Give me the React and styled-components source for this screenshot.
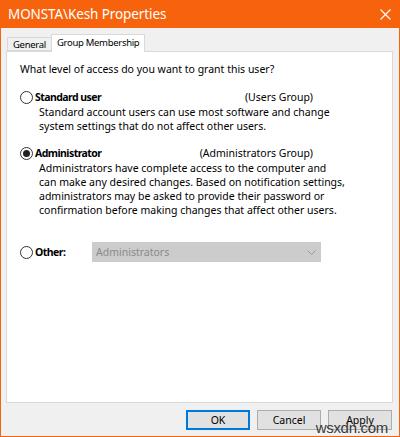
import React, { useState } from 'react';
import styled, { createGlobalStyle } from 'styled-components';

const GlobalStyle = createGlobalStyle`
  html, body { margin: 0; padding: 0; background: #f0f0f0; }
  body { font-family: "Noto Sans", "Liberation Sans", sans-serif; }
`;

const Window = styled.div`
  width: 400px;
  height: 437px;
  box-sizing: border-box;
  border: 1px solid #f7630c;
  border-top: none;
  background: #f0f0f0;
  display: flex;
  flex-direction: column;
  position: relative;
  color: #000;
`;

const TitleBar = styled.div`
  height: 28px;
  margin: 0 -1px;
  background: #f7630c;
  color: #fff;
  display: flex;
  align-items: center;
  justify-content: space-between;
  padding: 0 9px 0 8px;
  font-size: 13.5px;
  letter-spacing: -0.1px;
`;

const CloseButton = styled.span`
  display: flex;
  align-items: center;
`;

const Body = styled.div`
  flex: 1;
  padding: 6px 6px 0 5px;
  display: flex;
  flex-direction: column;
`;

const TabStrip = styled.div`
  display: flex;
  align-items: flex-end;
  height: 17px;
  margin-left: 1px;
`;

const Tab = styled.div`
  height: ${p => (p.$active ? '18px' : '14px')};
  box-sizing: border-box;
  padding: 0 5px;
  background: ${p => (p.$active ? '#fff' : '#f0f0f0')};
  border: 1px solid #d9d9d9;
  border-bottom: ${p => (p.$active ? 'none' : '1px solid #d9d9d9')};
  margin-left: ${p => (p.$active ? '-1px' : '0')};
  font-size: 9.5px;
  letter-spacing: -0.3px;
  display: flex;
  align-items: ${p => (p.$active ? 'flex-start' : 'center')};
  padding-top: ${p => (p.$active ? '1px' : '0')};
  position: relative;
  z-index: ${p => (p.$active ? 1 : 0)};
  margin-bottom: ${p => (p.$active ? '-1px' : '0')};
  cursor: default;
`;

const Panel = styled.div`
  height: 352px;
  box-sizing: border-box;
  background: #fff;
  border: 1px solid #d9d9d9;
  padding: 10px 14px 0 13px;
  font-size: 10.5px;
  display: flex;
  flex-direction: column;
`;

const Prompt = styled.div`
  margin: 0 0 13px 0;
  line-height: 14px;
`;

const Option = styled.div`
  display: flex;
  flex-direction: column;
  margin-top: ${p => p.$gap || '0'};
`;

const OptionHead = styled.label`
  display: flex;
  align-items: center;
  height: 16px;
  width: 293px;
  cursor: default;
`;

const Radio = styled.span`
  width: 11px;
  height: 11px;
  border: 1px solid #333;
  border-radius: 50%;
  margin-right: 2px;
  display: flex;
  align-items: center;
  justify-content: center;
  flex-shrink: 0;

  &::after {
    content: '';
    width: 7px;
    height: 7px;
    border-radius: 50%;
    background: ${p => (p.$checked ? '#222' : 'transparent')};
  }
`;

const OptionLabel = styled.span`
  font-weight: bold;
  letter-spacing: -0.55px;
  width: ${p => p.$width || 'auto'};
  flex-shrink: 0;
`;

const Group = styled.span`
  margin-left: auto;
`;

const Description = styled.div`
  margin-left: 19px;
  line-height: 14px;
`;

const Line = styled.div`
  white-space: nowrap;
`;

const Select = styled.div`
  width: 229px;
  height: 20px;
  flex-shrink: 0;
  box-sizing: border-box;
  background: #cccccc;
  color: #8a8a8a;
  display: flex;
  align-items: center;
  justify-content: space-between;
  padding: 0 5px 0 4px;
`;

const Footer = styled.div`
  display: flex;
  justify-content: flex-end;
  gap: 7px;
  padding: 7px 1px 0 0;
`;

const Button = styled.button`
  width: 64px;
  height: 20px;
  box-sizing: border-box;
  font-family: inherit;
  font-size: 10.5px;
  color: #000;
  padding: 0;
  background: #e1e1e1;
  border: 1px solid ${p => (p.$default ? '#0078d7' : '#adadad')};
  box-shadow: ${p => (p.$default ? 'inset 0 0 0 1px #0078d7' : 'none')};
`;

const Watermark = styled.span`
  position: absolute;
  right: 11px;
  bottom: 0;
  font-family: "Liberation Sans", Arial, sans-serif;
  font-size: 15px;
  color: #3a3a3a;
  letter-spacing: -0.3px;
`;

const options = [
  {
    id: 'standard',
    label: 'Standard user',
    group: '(Users Group)',
    gap: '0',
    lines: [
      'Standard account users can use most software and change',
      'system settings that do not affect other users.',
    ],
  },
  {
    id: 'admin',
    label: 'Administrator',
    group: '(Administrators Group)',
    gap: '12px',
    lines: [
      'Administrators have complete access to the computer and',
      'can make any desired changes. Based on notification settings,',
      'administrators may be asked to provide their password or',
      'confirmation before making changes that affect other users.',
    ],
  },
];

export default function App() {
  const [level, setLevel] = useState('admin');

  return (
    <>
      <GlobalStyle />
      <Window>
        <TitleBar>
          <span>MONSTA\Kesh Properties</span>
          <CloseButton>
            <svg width="11" height="11" viewBox="0 0 11 11">
              <path d="M0.5 0.5 L10.5 10.5 M10.5 0.5 L0.5 10.5" stroke="#fff" strokeWidth="1.1" />
            </svg>
          </CloseButton>
        </TitleBar>
        <Body>
          <TabStrip>
            <Tab>General</Tab>
            <Tab $active>Group Membership</Tab>
          </TabStrip>
          <Panel>
            <Prompt>What level of access do you want to grant this user?</Prompt>
            {options.map(o => (
              <Option key={o.id} $gap={o.gap}>
                <OptionHead onClick={() => setLevel(o.id)}>
                  <Radio $checked={level === o.id} />
                  <OptionLabel>{o.label}</OptionLabel>
                  <Group>{o.group}</Group>
                </OptionHead>
                <Description>
                  {o.lines.map(l => <Line key={l}>{l}</Line>)}
                </Description>
              </Option>
            ))}
            <Option $gap="27px">
              <OptionHead onClick={() => setLevel('other')}>
                <Radio $checked={level === 'other'} />
                <OptionLabel $width="57px">Other:</OptionLabel>
                <Select>
                  <span>Administrators</span>
                  <svg width="9" height="5" viewBox="0 0 9 5">
                    <path d="M0.5 0.5 L4.5 4.5 L8.5 0.5" fill="none" stroke="#999" strokeWidth="1" />
                  </svg>
                </Select>
              </OptionHead>
            </Option>
          </Panel>
          <Footer>
            <Button $default>OK</Button>
            <Button>Cancel</Button>
            <Button>Apply</Button>
          </Footer>
        </Body>
        <Watermark>wsxdn.com</Watermark>
      </Window>
    </>
  );
}
